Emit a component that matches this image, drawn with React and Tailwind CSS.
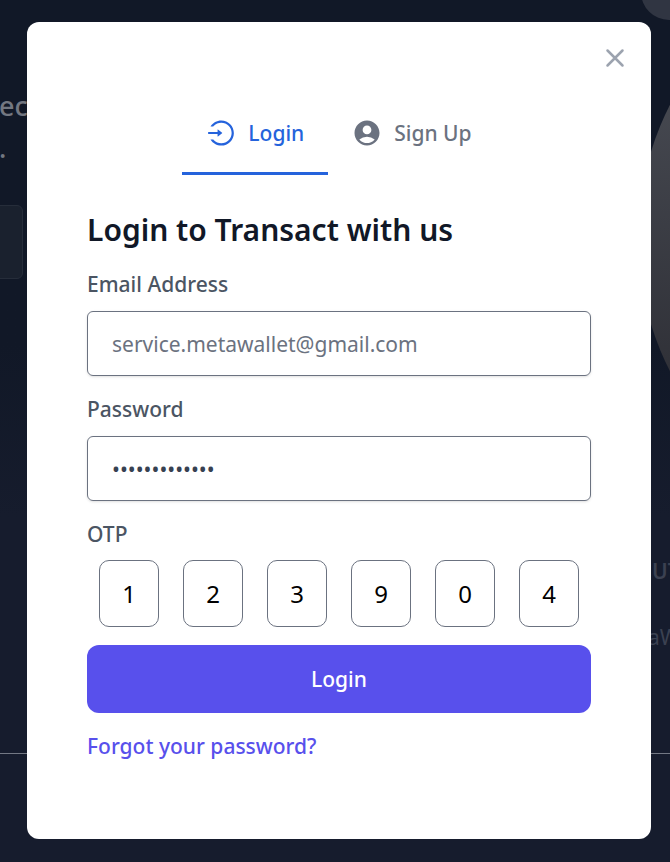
import { useState } from "react";
import { AiOutlineLogin } from "react-icons/ai";
import { MdAccountCircle } from "react-icons/md";
import { HiOutlineX } from "react-icons/hi";

function Backdrop() {
  return (
    <div
      aria-hidden="true"
      className="absolute inset-0 overflow-hidden bg-linear-to-b from-[#111827] from-40% to-[#161c2d] to-60%"
    >
      <div className="absolute -top-9 left-[641px] size-14 rounded-full bg-[#303542]" />
      <div className="absolute top-[-55px] left-[638px] size-[586px] rounded-full bg-linear-to-b from-[#484b53] from-20% to-[#2f3037] to-75%" />
      <p className="absolute top-[85px] -left-px text-[27px] leading-[42px] font-medium text-[#737781]">
        ec
        <br />.
      </p>
      <div className="absolute top-[205px] -left-3 h-[74px] w-[35px] rounded-md border border-[#262d3a] bg-[#1a212e]" />
      <p className="absolute top-[556px] left-[652px] text-[21px] leading-[30px] font-semibold text-[#3b4151]">
        UT
      </p>
      <p className="absolute top-[622px] left-[648px] text-[21px] leading-[30px] text-[#3b4151]">
        aW
      </p>
      <div className="absolute inset-x-0 top-[753px] h-px bg-[#737884]" />
    </div>
  );
}

function Tab({ icon: Icon, label, active, onClick }) {
  return (
    <button
      type="button"
      role="tab"
      aria-selected={active}
      onClick={onClick}
      className={
        active
          ? "flex items-center gap-3 border-b-3 border-[#2563dc] px-6 py-6 font-medium text-[#2563dc]"
          : "flex items-center gap-3 border-b-3 border-transparent px-6 py-6 font-medium text-[#6b7280]"
      }
    >
      <Icon className="size-[30px]" />
      <span>{label}</span>
    </button>
  );
}

function Field({ id, label, ...props }) {
  return (
    <div className="flex flex-col gap-3">
      <label htmlFor={id} className="font-medium text-[#4b5563]">
        {label}
      </label>
      <input
        id={id}
        className="h-[65px] w-full rounded-md border border-[#6b7280] px-6 text-[#374151] shadow-sm outline-none placeholder:text-[#6b7280]"
        {...props}
      />
    </div>
  );
}

export default function App() {
  const [tab, setTab] = useState("login");
  const [otp, setOtp] = useState(["1", "2", "3", "9", "0", "4"]);

  return (
    <div className="relative min-h-screen overflow-hidden pt-[22px] pr-[19px] pb-[23px] pl-[27px] font-['Noto_Sans',sans-serif] text-[21px] leading-[30px]">
      <Backdrop />
      <div
        role="dialog"
        aria-label="Login"
        className="relative rounded-xl bg-white px-[60px] pb-[78px]"
      >
        <div className="-mr-[39px] flex h-[72px] items-center justify-end">
          <button type="button" aria-label="Close" className="text-[#9ca3af]">
            <HiOutlineX className="size-[30px]" />
          </button>
        </div>
        <div role="tablist" className="flex justify-center">
          <Tab
            icon={AiOutlineLogin}
            label="Login"
            active={tab === "login"}
            onClick={() => setTab("login")}
          />
          <Tab
            icon={MdAccountCircle}
            label="Sign Up"
            active={tab === "signup"}
            onClick={() => setTab("signup")}
          />
        </div>
        <form className="pt-[34px]" onSubmit={(e) => e.preventDefault()}>
          <h3 className="mb-[18px] text-[30px] leading-[42px] font-semibold text-[#111827]">
            Login to Transact with us
          </h3>
          <div className="flex flex-col gap-[18px]">
            <Field
              id="email"
              type="email"
              label="Email Address"
              placeholder="service.metawallet@gmail.com"
            />
            <Field
              id="password"
              type="password"
              label="Password"
              defaultValue="metawallet123"
            />
            <fieldset>
              <legend className="mb-[11px] font-medium text-[#4b5563]">
                OTP
              </legend>
              <div className="flex justify-around">
                {otp.map((digit, i) => (
                  <input
                    key={i}
                    aria-label={`OTP digit ${i + 1}`}
                    inputMode="numeric"
                    maxLength={1}
                    value={digit}
                    onChange={(e) =>
                      setOtp(otp.map((d, j) => (j === i ? e.target.value : d)))
                    }
                    className="h-[67px] w-[60px] rounded-[10px] border border-[#6b7280] text-center text-2xl text-black outline-none"
                  />
                ))}
              </div>
            </fieldset>
            <button
              type="submit"
              className="h-[68px] w-full rounded-xl bg-[#5850ec] font-medium text-white"
            >
              Login
            </button>
            <a href="#forgot" className="self-start font-medium text-[#5850ec]">
              Forgot your password?
            </a>
          </div>
        </form>
      </div>
    </div>
  );
}
